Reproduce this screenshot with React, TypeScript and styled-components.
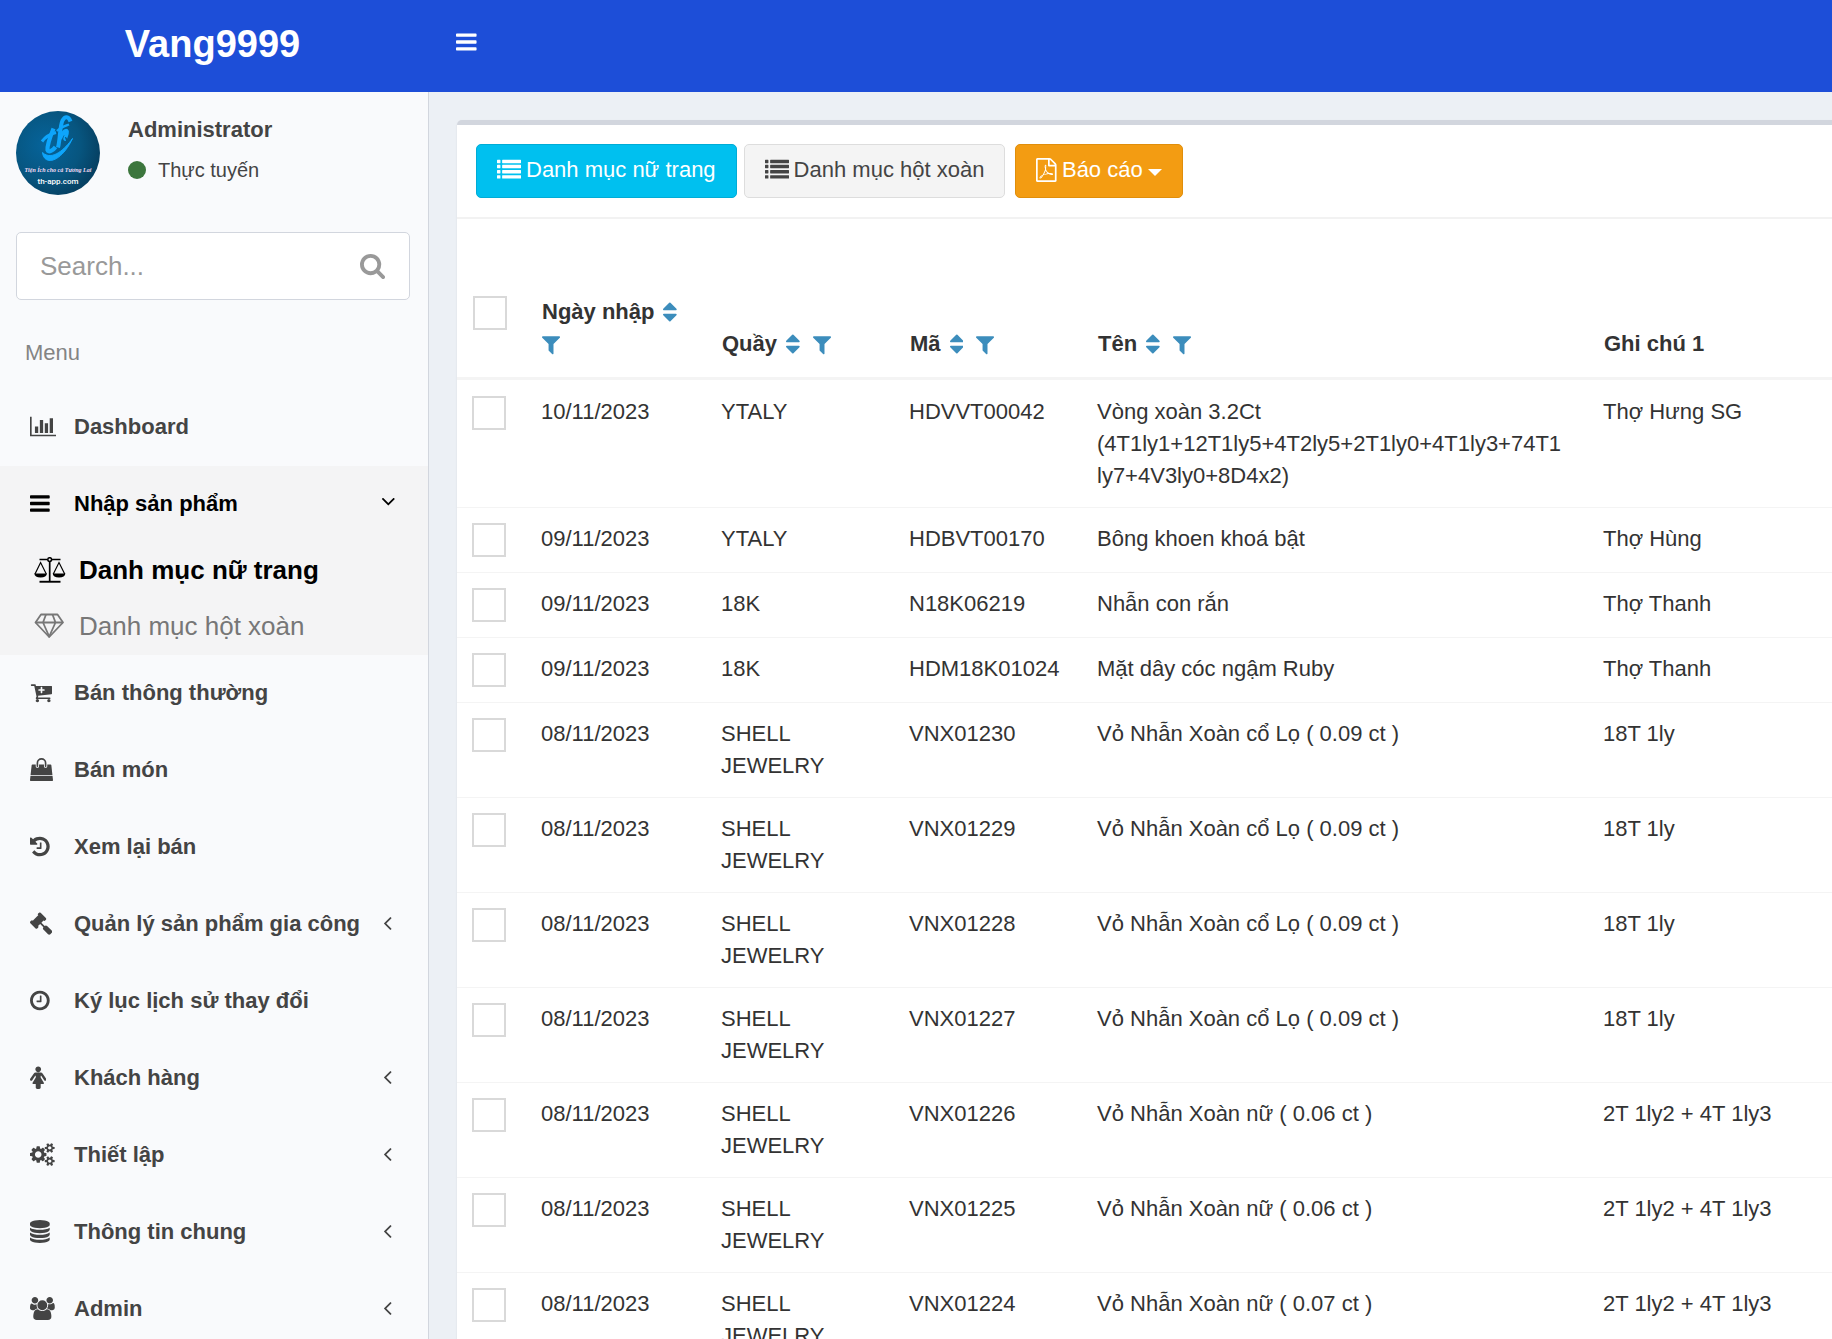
import React from "react";
import styled, { createGlobalStyle, css } from "styled-components";

const GlobalStyle = createGlobalStyle`
  *, *::before, *::after { box-sizing: border-box; }
  body {
    margin: 0;
    font-family: "Liberation Sans", Arial, Helvetica, sans-serif;
    font-size: 22px;
    line-height: 32px;
    color: #333;
    background: #ecf0f5;
  }
  button, input { font: inherit; }
  a { color: inherit; text-decoration: none; }
`;

/* ---------- icons ---------- */

type Glyph = { box: string; ratio: number; path: string };

const glyphs = {
  bars: {
    box: "128 0 1536 1792",
    ratio: 1536 / 1792,
    path: "M1664 1344v128q0 26-19 45t-45 19h-1408q-26 0-45-19t-19-45v-128q0-26 19-45t45-19h1408q26 0 45 19t19 45zm0-512v128q0 26-19 45t-45 19h-1408q-26 0-45-19t-19-45v-128q0-26 19-45t45-19h1408q26 0 45 19t19 45zm0-512v128q0 26-19 45t-45 19h-1408q-26 0-45-19t-19-45v-128q0-26 19-45t45-19h1408q26 0 45 19t19 45z",
  },
  chart: {
    box: "0 0 2048 1792",
    ratio: 2048 / 1792,
    path: "M640 896v512h-256v-512h256zm384-512v1024h-256v-1024h256zm1024 1152v128h-2048v-1536h128v1408h1920zm-640-896v768h-256v-768h256zm384-384v1152h-256v-1152h256z",
  },
  cart: {
    box: "64 0 1728 1792",
    ratio: 1728 / 1792,
    path: "M1216 704q0-26-19-45t-45-19h-128v-128q0-26-19-45t-45-19-45 19-19 45v128h-128q-26 0-45 19t-19 45 19 45 45 19h128v128q0 26 19 45t45 19 45-19 19-45v-128h128q26 0 45-19t19-45zm-448 832q0 53-37.5 90.5t-90.5 37.5-90.5-37.5-37.5-90.5 37.5-90.5 90.5-37.5 90.5 37.5 37.5 90.5zm896 0q0 53-37.5 90.5t-90.5 37.5-90.5-37.5-37.5-90.5 37.5-90.5 90.5-37.5 90.5 37.5 37.5 90.5zm128-1088v512q0 24-16 42.5t-41 21.5l-1044 122q1 7 4.5 21.5t6 26.5 2.5 22q0 16-24 64h920q26 0 45 19t19 45-19 45-45 19h-1024q-26 0-45-19t-19-45q0-14 11-39.5t29.5-59.5 20.5-38l-177-823h-204q-26 0-45-19t-19-45 19-45 45-19h256q16 0 28.5 6.5t20 15.5 13 24.5 7.5 26.5 5.5 29.5 4.5 25.5h1201q26 0 45 19t19 45z",
  },
  bag: {
    box: "0 0 1792 1792",
    ratio: 1,
    path: "M1757 1408l35 313q3 28-16 50-19 21-48 21h-1664q-29 0-48-21-19-22-16-50l35-313h1722zm-93-839l86 775h-1708l86-775q3-24 21-40.5t43-16.5h256v128q0 53 37.5 90.5t90.5 37.5 90.5-37.5 37.5-90.5v-128h384v128q0 53 37.5 90.5t90.5 37.5 90.5-37.5 37.5-90.5v-128h256q25 0 43 16.5t21 40.5zm-384-185v256q0 26-19 45t-45 19-45-19-19-45v-256q0-106-75-181t-181-75-181 75-75 181v256q0 26-19 45t-45 19-45-19-19-45v-256q0-159 112.5-271.5t271.5-112.5 271.5 112.5 112.5 271.5z",
  },
  history: {
    box: "128 0 1536 1792",
    ratio: 1536 / 1792,
    path: "M1664 896q0 156-61 298t-164 245-245 164-298 61q-172 0-327-72.5t-264-204.5q-7-10-6.5-22.5t8.5-20.5l137-138q10-9 25-9 16 2 23 12 73 95 179 147t225 52q104 0 198.5-40.5t163.5-109.5 109.5-163.5 40.5-198.5-40.5-198.5-109.5-163.5-163.5-109.5-198.5-40.5q-98 0-188 35.5t-160 101.5l137 138q31 30 14 69-17 40-59 40h-448q-26 0-45-19t-19-45v-448q0-42 40-59 39-17 69 14l130 129q107-101 244.5-156.5t284.5-55.5q156 0 298 61t245 164 164 245 61 298zm-640-288v448q0 14-9 23t-23 9h-320q-14 0-23-9t-9-23v-64q0-14 9-23t23-9h224v-352q0-14 9-23t23-9h64q14 0 23 9t9 23z",
  },
  gavel: {
    box: "40 0 1752 1792",
    ratio: 1752 / 1792,
    path: "M1771 1536q0 53-37 90l-107 108q-39 37-91 37-53 0-90-37l-363-364q-38-36-38-90 0-53 43-96l-256-256-126 126q-14 14-34 14t-34-14q2 2 12.5 12t12.5 13 10 11.5 10 13.5 6 13.5 5.5 16.5 1.5 18q0 38-28 68-3 3-16.5 18t-19 20.5-18.5 16.5-22 15.5-22 9-26 4.5q-40 0-68-28l-408-408q-28-28-28-68 0-13 4.5-26t9-22 15.5-22 16.5-18.5 20.5-19 18-16.5q30-28 68-28 10 0 18 1.5t16.5 5.5 13.5 6 13.5 10 11.5 10 13 12.5 12 12.5q-14-14-14-34t14-34l348-348q14-14 34-14t34 14q-2-2-12.5-12t-12.5-13-10-11.5-10-13.5-6-13.5-5.5-16.5-1.5-18q0-38 28-68 3-3 16.5-18t19-20.5 18.5-16.5 22-15.5 22-9 26-4.5q40 0 68 28l408 408q28 28 28 68 0 13-4.5 26t-9 22-15.5 22-16.5 18.5-20.5 19-18 16.5q-30 28-68 28-10 0-18-1.5t-16.5-5.5-13.5-6-13.5-10-11.5-10-13-12.5-12-12.5q14 14 14 34t-14 34l-126 126 256 256q43-43 96-43 52 0 91 37l363 363q37 39 37 91z",
  },
  clock: {
    box: "128 0 1536 1792",
    ratio: 1536 / 1792,
    path: "M1024 544v448q0 14-9 23t-23 9h-320q-14 0-23-9t-9-23v-64q0-14 9-23t23-9h224v-352q0-14 9-23t23-9h64q14 0 23 9t9 23zm416 352q0-148-73-273t-198-198-273-73-273 73-198 198-73 273 73 273 198 198 273 73 273-73 198-198 73-273zm224 0q0 209-103 385.5t-279.5 279.5-385.5 103-385.5-103-279.5-279.5-103-385.5 103-385.5 279.5-279.5 385.5-103 385.5 103 279.5 279.5 103 385.5z",
  },
  female: {
    box: "256 0 1280 1792",
    ratio: 1280 / 1792,
    path: "M1536 1056q0 40-28 68t-68 28q-51 0-80-43l-227-341h-45v132l247 411q9 15 9 33 0 26-19 45t-45 19h-192v272q0 46-33 79t-79 33h-160q-46 0-79-33t-33-79v-272h-192q-26 0-45-19t-19-45q0-18 9-33l247-411v-132h-45l-227 341q-29 43-80 43-40 0-68-28t-28-68q0-29 16-53l256-384q73-107 176-107h384q103 0 176 107l256 384q16 24 16 53zm-416-800q0 93-65.5 158.5t-158.5 65.5-158.5-65.5-65.5-158.5 65.5-158.5 158.5-65.5 158.5 65.5 65.5 158.5z",
  },
  cogs: {
    box: "0 0 1920 1792",
    ratio: 1920 / 1792,
    path: "M896 896q0-106-75-181t-181-75-181 75-75 181 75 181 181 75 181-75 75-181zm768 512q0-52-38-90t-90-38-90 38-38 90q0 53 37.5 90.5t90.5 37.5 90.5-37.5 37.5-90.5zm0-1024q0-52-38-90t-90-38-90 38-38 90q0 53 37.5 90.5t90.5 37.5 90.5-37.5 37.5-90.5zm-384 421v185q0 10-7 19.5t-16 10.5l-155 24q-11 35-32 76 34 48 90 115 7 11 7 20 0 12-7 19-23 30-82.5 89.5t-78.5 59.5q-11 0-21-7l-115-90q-37 19-77 31-11 108-23 155-7 24-30 24h-186q-11 0-20-7.5t-10-17.5l-23-153q-34-10-75-31l-118 89q-7 7-20 7-11 0-21-8-144-133-144-160 0-9 7-19 10-14 41-53t47-61q-23-44-35-82l-152-24q-10-1-17-9.5t-7-19.5v-185q0-10 7-19.5t16-10.5l155-24q11-35 32-76-34-48-90-115-7-11-7-20 0-12 7-20 22-30 82-89t79-59q11 0 21 7l115 90q34-18 77-32 11-108 23-154 7-24 30-24h186q11 0 20 7.5t10 17.5l23 153q34 10 75 31l118-89q8-7 20-7 11 0 21 8 144 133 144 160 0 8-7 19-12 16-42 54t-45 60q23 48 34 82l152 23q10 2 17 10.5t7 19.5zm640 533v140q0 16-149 31-12 27-30 52 51 113 51 138 0 4-4 7-122 71-124 71-8 0-46-47t-52-68q-20 2-30 2t-30-2q-14 21-52 68t-46 47q-2 0-124-71-4-3-4-7 0-25 51-138-18-25-30-52-149-15-149-31v-140q0-16 149-31 13-29 30-52-51-113-51-138 0-4 4-7 4-2 35-20t59-34 30-16q8 0 46 46.5t52 67.5q20-2 30-2t30 2q51-71 92-112l6-2q4 0 124 70 4 3 4 7 0 25-51 138 17 23 30 52 149 15 149 31zm0-1024v140q0 16-149 31-12 27-30 52 51 113 51 138 0 4-4 7-122 71-124 71-8 0-46-47t-52-68q-20 2-30 2t-30-2q-14 21-52 68t-46 47q-2 0-124-71-4-3-4-7 0-25 51-138-18-25-30-52-149-15-149-31v-140q0-16 149-31 13-29 30-52-51-113-51-138 0-4 4-7 4-2 35-20t59-34 30-16q8 0 46 46.5t52 67.5q20-2 30-2t30 2q51-71 92-112l6-2q4 0 124 70 4 3 4 7 0 25-51 138 17 23 30 52 149 15 149 31z",
  },
  database: {
    box: "128 0 1536 1792",
    ratio: 1536 / 1792,
    path: "M896 768q237 0 443-43t325-127v170q0 69-103 128t-280 93.5-385 34.5-385-34.5-280-93.5-103-128v-170q119 84 325 127t443 43zm0 768q237 0 443-43t325-127v170q0 69-103 128t-280 93.5-385 34.5-385-34.5-280-93.5-103-128v-170q119 84 325 127t443 43zm0-384q237 0 443-43t325-127v170q0 69-103 128t-280 93.5-385 34.5-385-34.5-280-93.5-103-128v-170q119 84 325 127t443 43zm0-1152q208 0 385 34.5t280 93.5 103 128v128q0 69-103 128t-280 93.5-385 34.5-385-34.5-280-93.5-103-128v-128q0-69 103-128t280-93.5 385-34.5z",
  },
  users: {
    box: "0 0 1920 1792",
    ratio: 1920 / 1792,
    path: "M593 896q-162 5-265 128h-134q-82 0-138-40.5t-56-118.5q0-353 124-353 6 0 43.5 21t97.5 42.5 119 21.5q67 0 133-23-5 37-5 66 0 159 81 256zm1071 637q0 120-73 189.5t-194 69.5h-874q-121 0-194-69.5t-73-189.5q0-53 3.5-103.5t14-109 26.5-108.5 43-97.5 62-81 85.5-53.5 111.5-20q10 0 43 21.5t73 48 107 48 135 21.5 135-21.5 107-48 73-48 43-21.5q61 0 111.5 20t85.5 53.5 62 81 43 97.5 26.5 108.5 14 109 3.5 103.5zm-1024-1277q0 106-75 181t-181 75-181-75-75-181 75-181 181-75 181 75 75 181zm704 384q0 159-112.5 271.5t-271.5 112.5-271.5-112.5-112.5-271.5 112.5-271.5 271.5-112.5 271.5 112.5 112.5 271.5zm576 225q0 78-56 118.5t-138 40.5h-134q-103-123-265-128 93-134 93-293 0-29-5-66 66 23 133 23 59 0 119-21.5t97.5-42.5 43.5-21q124 0 124 353zm-128-609q0 106-75 181t-181 75-181-75-75-181 75-181 181-75 181 75 75 181z",
  },
  left: {
    box: "0 64 1792 1792",
    ratio: 1,
    path: "M1203 544q0 13-10 23l-393 393 393 393q10 10 10 23t-10 23l-50 50q-10 10-23 10t-23-10l-466-466q-10-10-10-23t10-23l466-466q10-10 23-10t23 10l50 50q10 10 10 23z",
  },
  down: {
    box: "-64 192 1792 1792",
    ratio: 1,
    path: "M1395 736q0 13-10 23l-466 466q-10 10-23 10t-23-10l-466-466q-10-10-10-23t10-23l50-50q10-10 23-10t23 10l393 393 393-393q10-10 23-10t23 10l50 50q10 10 10 23z",
  },
  search: {
    box: "64 64 1664 1792",
    ratio: 1664 / 1792,
    path: "M1216 832q0-185-131.5-316.5t-316.5-131.5-316.5 131.5-131.5 316.5 131.5 316.5 316.5 131.5 316.5-131.5 131.5-316.5zm512 832q0 52-38 90t-90 38q-54 0-90-38l-343-342q-179 124-399 124-143 0-273.5-55.5t-225-150-150-225-55.5-273.5 55.5-273.5 150-225 225-150 273.5-55.5 273.5 55.5 225 150 150 225 55.5 273.5q0 220-124 399l343 343q37 37 37 90z",
  },
  filter: {
    box: "192 0 1408 1792",
    ratio: 1408 / 1792,
    path: "M1595 295q17 41-14 70l-493 493v742q0 42-39 59-13 5-25 5-27 0-45-19l-256-256q-19-19-19-45v-486l-493-493q-31-29-14-70 17-39 59-39h1280q42 0 59 39z",
  },
  sort: {
    box: "384 0 1024 1792",
    ratio: 1024 / 1792,
    path: "M1408 1088q0 26-19 45l-448 448q-19 19-45 19t-45-19l-448-448q-19-19-19-45t19-45 45-19h896q26 0 45 19t19 45zm0-384q0 26-19 45t-45 19h-896q-26 0-45-19t-19-45 19-45l448-448q19-19 45-19t45 19l448 448q19 19 19 45z",
  },
  list: {
    box: "0 0 1792 1792",
    ratio: 1,
    path: "M32 1280h192q32 0 32 32v192q0 32-32 32h-192q-32 0-32-32v-192q0-32 32-32zm0-384h192q32 0 32 32v192q0 32-32 32h-192q-32 0-32-32v-192q0-32 32-32zm0-384h192q32 0 32 32v192q0 32-32 32h-192q-32 0-32-32v-192q0-32 32-32zm0-384h192q32 0 32 32v192q0 32-32 32h-192q-32 0-32-32v-192q0-32 32-32zm384 1152h1344q32 0 32 32v192q0 32-32 32h-1344q-32 0-32-32v-192q0-32 32-32zm0-384h1344q32 0 32 32v192q0 32-32 32h-1344q-32 0-32-32v-192q0-32 32-32zm0-384h1344q32 0 32 32v192q0 32-32 32h-1344q-32 0-32-32v-192q0-32 32-32zm0-384h1344q32 0 32 32v192q0 32-32 32h-1344q-32 0-32-32v-192q0-32 32-32z",
  },
  pdf: {
    box: "128 0 1536 1792",
    ratio: 1536 / 1792,
    path: "M1596 380q28 28 48 76t20 88v1152q0 40-28 68t-68 28h-1344q-40 0-68-28t-28-68v-1600q0-40 28-68t68-28h896q40 0 88 20t76 48zm-444-244v376h376q-10-29-22-41l-313-313q-12-12-41-22zm384 1528v-1024h-416q-40 0-68-28t-28-68v-416h-768v1536h1280zm-514-593q33 26 84 56 59-7 117-7 147 0 177 49 16 22 2 52 0 1-1 2l-2 2v1q-6 38-71 38-48 0-115-20t-130-53q-221 24-392 83-153 262-242 262-15 0-28-7l-24-12q-1-1-6-5-10-10-6-36 9-40 56-91.5t132-96.5q14-9 23 6 2 2 2 4 52-85 107-197 68-136 104-262-24-82-30.5-159.5t6.5-127.5q11-40 42-40h22q23 0 35 15 18 21 9 68-2 6-4 8 1 3 1 8v30q-2 123-14 192 55 164 146 238zm-576 411q52-24 137-158-51 40-87.5 84t-49.5 74zm398-920q-15 42-2 132 1-7 7-44 0-3 7-43 1-4 4-8-1-1-1-2-1-2-1-3-1-22-13-36 0 1-1 2v2zm-124 661q135-54 284-81-2-1-13-9.5t-16-13.5q-76-67-127-176-27 86-83 197-30 56-45 83zm646-16q-24-24-140-24 76 28 124 28 14 0 18-1 0-1-2-3z",
  },
} satisfies Record<string, Glyph>;

type IconName = keyof typeof glyphs;

const Svg = styled.svg`
  display: block;
  flex: none;
  fill: currentColor;
`;

function Icon({ name, size = 23 }: { name: IconName; size?: number }) {
  const g = glyphs[name];
  return (
    <Svg viewBox={g.box} width={size * g.ratio} height={size} aria-hidden="true">
      <path d={g.path} />
    </Svg>
  );
}

function ScaleIcon() {
  return (
    <Svg viewBox="0 0 32 26" width="32" height="26" aria-hidden="true">
      <g fill="none" stroke="currentColor">
        <path d="M5.500 2.500H13.500M18 2.500H26.500M15.700 5V24" strokeWidth="1.700" />
        <circle cx="15.700" cy="2.600" r="1.900" strokeWidth="1.500" />
        <path d="M1 17L6.600 5.500L12.300 17M19.300 17L25 5.500L30.700 17" strokeWidth="1.200" />
      </g>
      <path d="M5.500 23.800H26.500V25.700H5.500z" />
      <path d="M0.300 16.500H13Q12.500 20.600 6.600 20.600T0.300 16.500zM18.700 16.500H31.400Q30.900 20.600 25 20.600T18.700 16.500z" />
    </Svg>
  );
}

function DiamondIcon() {
  return (
    <Svg viewBox="0 0 30 26" width="30" height="26" aria-hidden="true">
      <g fill="none" stroke="currentColor" strokeWidth="1.800" strokeLinejoin="round">
        <path d="M7 1.500H23.500L29 9.500L15.200 24L1.500 9.500Z" />
        <path d="M1.500 9.500H29M12 1.500L9 9.500L15.200 23.500L21.500 9.500L18.500 1.500" />
      </g>
    </Svg>
  );
}

function AvatarArt() {
  return (
    <Svg viewBox="0 0 84 84" width="84" height="84" role="img" aria-label="th-app.com">
      <defs>
        <radialGradient id="disc" cx="0.35" cy="0.4" r="0.7">
          <stop offset="0" stopColor="#06649b" />
          <stop offset="0.6" stopColor="#07557f" />
          <stop offset="1" stopColor="#063d5e" />
        </radialGradient>
      </defs>
      <circle cx="42" cy="42" r="42" fill="url(#disc)" />
      <g fill="none" stroke="#0ea5fb" strokeLinejoin="round">
        <path d="M37.500 17.500C34.500 25 31 35 31.500 39C32.500 42 37 39.500 39.500 36" strokeWidth="4.200" />
        <path d="M26 30.500C30 25 34 23 40 21.500" strokeWidth="3" />
        <path d="M42 36.500C44.500 27 43.500 16 46.500 9.500C49 5 52.500 5 54.500 10.500" strokeWidth="4" />
        <path d="M44 28C46 22 50 18 51 20.500C51.500 23.500 48 28.500 49.500 28" strokeWidth="3.800" />
        <path d="M41 20C45 16 49 15 53 13.500" strokeWidth="2.400" />
      </g>
      <path d="M26.500 41.500C28 55 45 52 56.500 27.500C49 38 36 50.500 26.500 41.500z" fill="#0ea5fb" stroke="#0ea5fb" strokeWidth="1" />
      <text x="42" y="61" textAnchor="middle" fontSize="6" fontStyle="italic" fontWeight="700" fontFamily="Liberation Serif, serif" fill="#f3dcf5">
        Tiện Ích cho cả Tương Lai
      </text>
      <text x="42" y="73" textAnchor="middle" fontSize="8" fontWeight="500" fontFamily="Roboto, sans-serif" fill="#fff">
        th-app.com
      </text>
    </Svg>
  );
}

/* ---------- shell ---------- */

const Shell = styled.div`
  display: flex;
  flex-direction: column;
  height: 100vh;
  overflow: hidden;
`;

const TopBar = styled.header`
  display: flex;
  align-items: stretch;
  flex: none;
  height: 92px;
  color: #fff;
  background: #1d4ed8;
`;

const Brand = styled.a`
  width: 428px;
  padding: 20px 3px 0 0;
  font-size: 38px;
  line-height: 48px;
  font-weight: 700;
  text-align: center;
`;

const MenuToggle = styled.button`
  display: flex;
  align-items: center;
  padding: 0 28px 8px;
  border: 0;
  color: inherit;
  background: none;
`;

const Body = styled.div`
  display: flex;
  flex: 1;
  min-height: 0;
`;

const Sidebar = styled.aside`
  flex: none;
  width: 429px;
  overflow: hidden;
  border-right: 1px solid #d2d6de;
  color: #444;
  background: #f9fafc;
`;

const UserPanel = styled.div`
  display: flex;
  gap: 28px;
  padding: 19px 16px 0;
`;

const UserInfo = styled.div`
  display: flex;
  flex-direction: column;
  gap: 8px;
  padding-top: 3px;
`;

const UserName = styled.strong`
  font-weight: 700;
`;

const Status = styled.a`
  display: flex;
  align-items: center;
  gap: 12px;
  font-size: 20px;
`;

const StatusDot = styled.span`
  width: 18px;
  height: 18px;
  border-radius: 50%;
  background: #3c763d;
`;

const SearchForm = styled.form`
  display: flex;
  align-items: center;
  height: 68px;
  margin: 37px 18px 0 16px;
  border: 1px solid #d2d6de;
  border-radius: 5px;
  background: #fff;
`;

const SearchInput = styled.input`
  flex: 1;
  min-width: 0;
  height: 100%;
  padding: 0 23px;
  border: 0;
  outline: 0;
  font-size: 26px;
  color: #666;
  background: none;
  &::placeholder { color: #999; opacity: 1; }
`;

const SearchButton = styled.button`
  padding: 0 24px 0 0;
  border: 0;
  color: #999;
  background: none;
`;

const MenuTitle = styled.h2`
  margin: 0;
  padding: 37px 25px 20px;
  font-size: 22px;
  line-height: 32px;
  font-weight: 400;
  color: #848484;
`;

const MenuList = styled.ul`
  margin: 0;
  padding: 0;
  list-style: none;
`;

const MenuItem = styled.li<{ $active?: boolean }>`
  ${(p) => p.$active && css`
    color: #000;
    background: #f4f4f5;
  `}
`;

const MenuLink = styled.a`
  display: flex;
  align-items: center;
  height: 77px;
  padding: 0 29px 2px 30px;
  font-weight: 700;
`;

const MenuIcon = styled.span<{ $width?: number }>`
  flex: none;
  width: ${(p) => p.$width ?? 44}px;
`;

const MenuLabel = styled.span`
  flex: 1;
  white-space: nowrap;
`;

const SubLink = styled.a<{ $current?: boolean }>`
  display: flex;
  align-items: center;
  height: 56px;
  padding: 0 30px 2px 34px;
  font-size: 26px;
  font-weight: ${(p) => (p.$current ? 700 : 400)};
  color: ${(p) => (p.$current ? "#000" : "#777")};
`;

/* ---------- content ---------- */

const Content = styled.main`
  flex: 1;
  min-width: 0;
  overflow: hidden;
  padding: 28px 0 0 28px;
`;

const Box = styled.section`
  min-height: 100%;
  border-top: 5px solid #d2d6de;
  border-radius: 5px 0 0 5px;
  background: #fff;
  box-shadow: 0 1px 2px rgba(0, 0, 0, 0.1);
`;

const Toolbar = styled.div`
  display: flex;
  padding: 19px;
  border-bottom: 2px solid #f2f2f2;
`;

const tones = {
  info: { bg: "#00c0ef", line: "#00acd6", text: "#fff" },
  plain: { bg: "#f4f4f4", line: "#ddd", text: "#444" },
  warning: { bg: "#f39c12", line: "#e08e0b", text: "#fff" },
};

const ToolButton = styled.button<{ $tone: keyof typeof tones }>`
  display: flex;
  align-items: center;
  gap: 5px;
  height: 54px;
  margin-right: 7px;
  padding: 0 20px 2px;
  border: 1px solid ${(p) => tones[p.$tone].line};
  border-radius: 5px;
  color: ${(p) => tones[p.$tone].text};
  background: ${(p) => tones[p.$tone].bg};
  white-space: nowrap;
`;

const ButtonGroup = styled.div`
  padding-left: 3px;
`;

const Caret = styled.span`
  margin-top: 4px;
  border-top: 7px solid;
  border-right: 7px solid transparent;
  border-left: 7px solid transparent;
`;

const Table = styled.table`
  width: 100%;
  border-collapse: separate;
  border-spacing: 0;
  table-layout: fixed;
`;

const Col = styled.col<{ $width?: number }>`
  width: ${(p) => (p.$width ? `${p.$width}px` : "auto")};
`;

const HeadCell = styled.th`
  padding: 77px 12px 17px 13px;
  border-bottom: 3px solid #f4f4f4;
  text-align: left;
  vertical-align: bottom;
`;

const HeadLabel = styled.div`
  display: flex;
  flex-wrap: wrap;
  align-items: center;
`;

const HeadCheckCell = styled(HeadCell)`
  padding-left: 16px;
  vertical-align: top;
`;

const HeadButton = styled.button`
  display: flex;
  align-items: center;
  height: 32px;
  padding: 0;
  border: 0;
  color: #3c8dbc;
  background: none;
`;

const SortButton = styled(HeadButton)`
  margin: 0 13px 0 9px;
`;

const Row = styled.tr`
  & + & > td { border-top: 1px solid #f4f4f4; }
  &:first-child > td { border-top: 1px solid transparent; }
`;

const Cell = styled.td<{ $roomy?: boolean }>`
  padding: 15px ${(p) => (p.$roomy ? 28 : 12)}px 15px 12px;
  vertical-align: top;
  overflow-wrap: anywhere;
`;

const CheckCell = styled(Cell)`
  padding-left: 15px;
`;

const Check = styled.input`
  display: block;
  width: 34px;
  height: 34px;
  margin: 0;
  border: 2px solid #d9d9d9;
  background: #fff;
  appearance: none;
`;

/* ---------- data ---------- */

type Entry = { label: string; icon: IconName; more?: boolean };

const entries: Entry[] = [
  { label: "Bán thông thường", icon: "cart" },
  { label: "Bán món", icon: "bag" },
  { label: "Xem lại bán", icon: "history" },
  { label: "Quản lý sản phẩm gia công", icon: "gavel", more: true },
  { label: "Ký lục lịch sử thay đổi", icon: "clock" },
  { label: "Khách hàng", icon: "female", more: true },
  { label: "Thiết lập", icon: "cogs", more: true },
  { label: "Thông tin chung", icon: "database", more: true },
  { label: "Admin", icon: "users", more: true },
];

const columns = [
  { title: "Ngày nhập", width: 180, tools: true },
  { title: "Quầy", width: 188, tools: true },
  { title: "Mã", width: 188, tools: true },
  { title: "Tên", width: 506, tools: true },
  { title: "Ghi chú 1", tools: false },
];

const rows = [
  ["10/11/2023", "YTALY", "HDVVT00042", "Vòng xoàn 3.2Ct (4T1ly1+12T1ly5+4T2ly5+2T1ly0+4T1ly3+74T1ly7+4V3ly0+8D4x2)", "Thợ Hưng SG"],
  ["09/11/2023", "YTALY", "HDBVT00170", "Bông khoen khoá bật", "Thợ Hùng"],
  ["09/11/2023", "18K", "N18K06219", "Nhẫn con rắn", "Thợ Thanh"],
  ["09/11/2023", "18K", "HDM18K01024", "Mặt dây cóc ngậm Ruby", "Thợ Thanh"],
  ["08/11/2023", "SHELL JEWELRY", "VNX01230", "Vỏ Nhẫn Xoàn cổ Lọ ( 0.09 ct )", "18T 1ly"],
  ["08/11/2023", "SHELL JEWELRY", "VNX01229", "Vỏ Nhẫn Xoàn cổ Lọ ( 0.09 ct )", "18T 1ly"],
  ["08/11/2023", "SHELL JEWELRY", "VNX01228", "Vỏ Nhẫn Xoàn cổ Lọ ( 0.09 ct )", "18T 1ly"],
  ["08/11/2023", "SHELL JEWELRY", "VNX01227", "Vỏ Nhẫn Xoàn cổ Lọ ( 0.09 ct )", "18T 1ly"],
  ["08/11/2023", "SHELL JEWELRY", "VNX01226", "Vỏ Nhẫn Xoàn nữ ( 0.06 ct )", "2T 1ly2 + 4T 1ly3"],
  ["08/11/2023", "SHELL JEWELRY", "VNX01225", "Vỏ Nhẫn Xoàn nữ ( 0.06 ct )", "2T 1ly2 + 4T 1ly3"],
  ["08/11/2023", "SHELL JEWELRY", "VNX01224", "Vỏ Nhẫn Xoàn nữ ( 0.07 ct )", "2T 1ly2 + 4T 1ly3"],
];

function MenuEntry({ label, icon, more }: Entry) {
  return (
    <MenuItem>
      <MenuLink href="#">
        <MenuIcon><Icon name={icon} /></MenuIcon>
        <MenuLabel>{label}</MenuLabel>
        {more && <Icon name="left" />}
      </MenuLink>
    </MenuItem>
  );
}

export default function App() {
  return (
    <>
      <GlobalStyle />
      <Shell>
        <TopBar>
          <Brand href="#">Vang9999</Brand>
          <MenuToggle type="button" aria-label="Menu">
            <Icon name="bars" size={24} />
          </MenuToggle>
        </TopBar>
        <Body>
          <Sidebar>
            <UserPanel>
              <AvatarArt />
              <UserInfo>
                <UserName>Administrator</UserName>
                <Status href="#"><StatusDot />Thực tuyến</Status>
              </UserInfo>
            </UserPanel>
            <SearchForm>
              <SearchInput type="text" placeholder="Search..." aria-label="Search" />
              <SearchButton type="button" aria-label="Search">
                <Icon name="search" size={27} />
              </SearchButton>
            </SearchForm>
            <MenuTitle>Menu</MenuTitle>
            <MenuList>
              <MenuEntry label="Dashboard" icon="chart" />
              <MenuItem $active>
                <MenuLink href="#">
                  <MenuIcon><Icon name="bars" /></MenuIcon>
                  <MenuLabel>Nhập sản phẩm</MenuLabel>
                  <Icon name="down" />
                </MenuLink>
                <SubLink href="#" $current>
                  <MenuIcon $width={45}><ScaleIcon /></MenuIcon>
                  <MenuLabel>Danh mục nữ trang</MenuLabel>
                </SubLink>
                <SubLink href="#">
                  <MenuIcon $width={45}><DiamondIcon /></MenuIcon>
                  <MenuLabel>Danh mục hột xoàn</MenuLabel>
                </SubLink>
              </MenuItem>
              {entries.map((entry) => (
                <MenuEntry key={entry.label} {...entry} />
              ))}
            </MenuList>
          </Sidebar>
          <Content>
            <Box>
              <Toolbar>
                <ToolButton type="button" $tone="info">
                  <Icon name="list" size={24} />Danh mục nữ trang
                </ToolButton>
                <ToolButton type="button" $tone="plain">
                  <Icon name="list" size={24} />Danh mục hột xoàn
                </ToolButton>
                <ButtonGroup>
                  <ToolButton type="button" $tone="warning">
                    <Icon name="pdf" size={24} />Báo cáo<Caret />
                  </ToolButton>
                </ButtonGroup>
              </Toolbar>
              <Table>
                <colgroup>
                  <Col $width={72} />
                  {columns.map((c) => <Col key={c.title} $width={c.width} />)}
                </colgroup>
                <thead>
                  <tr>
                    <HeadCheckCell><Check type="checkbox" aria-label="Select all" /></HeadCheckCell>
                    {columns.map((c) => (
                      <HeadCell key={c.title} scope="col">
                        <HeadLabel>
                          {c.title}
                          {c.tools && (
                            <>
                              <SortButton type="button" aria-label={`Sort ${c.title}`}>
                                <Icon name="sort" size={24} />
                              </SortButton>
                              <HeadButton type="button" aria-label={`Filter ${c.title}`}>
                                <Icon name="filter" size={23} />
                              </HeadButton>
                            </>
                          )}
                        </HeadLabel>
                      </HeadCell>
                    ))}
                  </tr>
                </thead>
                <tbody>
                  {rows.map((row) => (
                    <Row key={row[2]}>
                      <CheckCell><Check type="checkbox" aria-label={row[2]} /></CheckCell>
                      {row.map((value, i) => (
                        <Cell key={columns[i].title} $roomy={i === 3}>{value}</Cell>
                      ))}
                    </Row>
                  ))}
                </tbody>
              </Table>
            </Box>
          </Content>
        </Body>
      </Shell>
    </>
  );
}
